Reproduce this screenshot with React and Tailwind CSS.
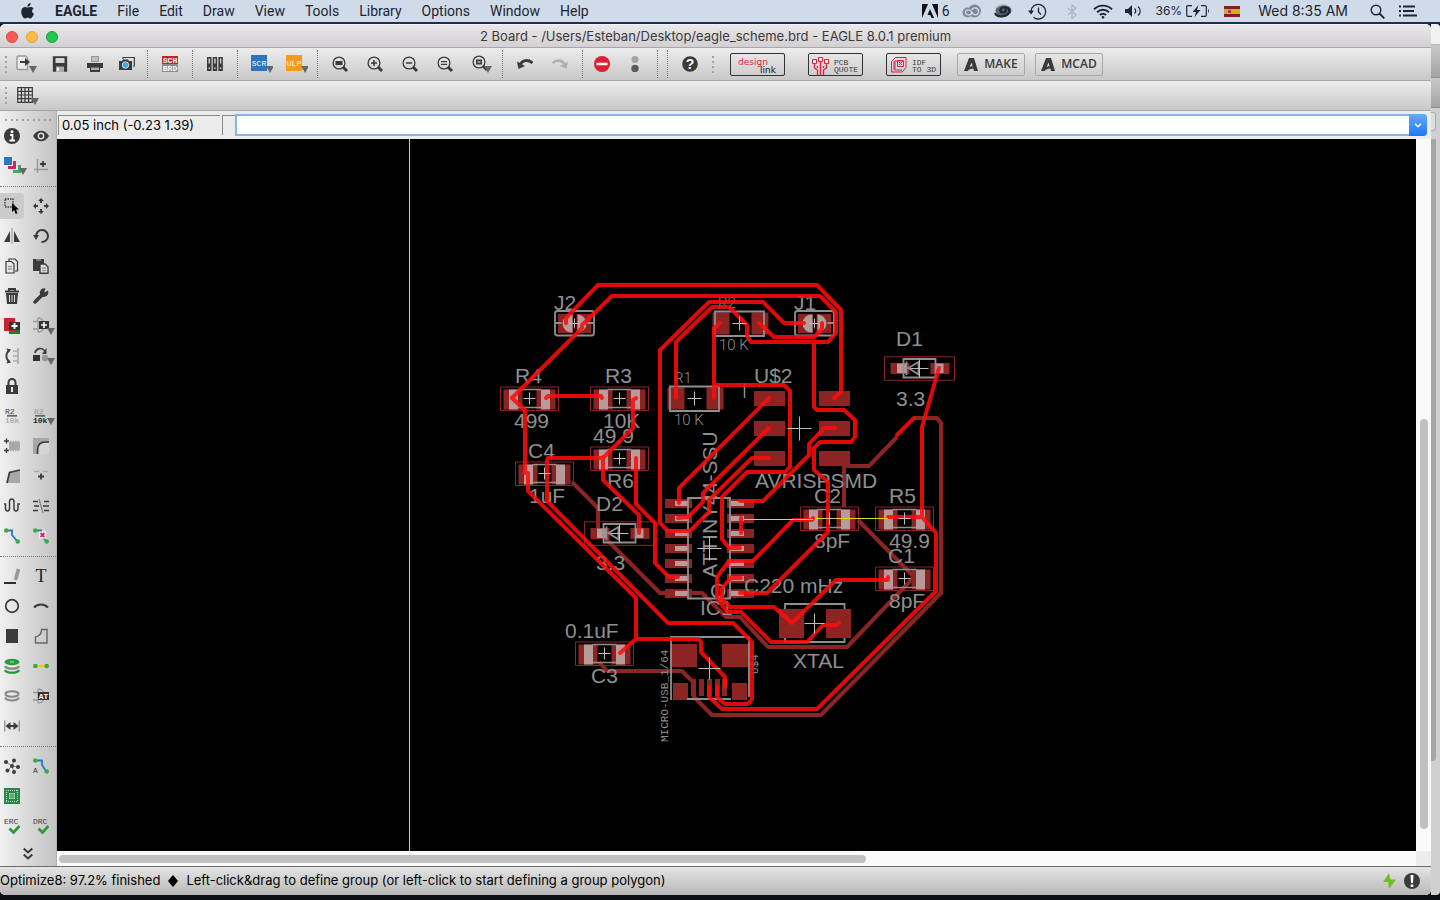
import { clsx } from 'clsx';

const DARK = '#3b3b3b';
const MAROON = '#8c2424';
const RED = '#ff0c0c';
const GREY = '#8f8f8f';
const PALE = '#b89a9a';

const Icon = ({ w = 16, h = 16, children }) => (
  <svg
    width={w}
    height={h}
    viewBox={`0 0 ${w} ${h}`}
    fill="none"
    stroke={DARK}
    strokeWidth="1.4"
    className="shrink-0"
    aria-hidden="true"
  >
    {children}
  </svg>
);

const Caret = ({ x = 12, y = 11 }) => <path d={`M${x} ${y}h8l-4 7z`} fill="#666" stroke="none" />;

const PixelText = ({ x, y, size = 8, fill = DARK, children, bold, anchor = 'start' }) => (
  <text
    x={x}
    y={y}
    fontSize={size}
    fill={fill}
    stroke="none"
    textAnchor={anchor}
    fontWeight={bold ? 700 : 400}
    fontFamily="'Liberation Mono', monospace"
  >
    {children}
  </text>
);

/* ---------- menu bar ---------- */

const menus = ['File', 'Edit', 'Draw', 'View', 'Tools', 'Library', 'Options', 'Window', 'Help'];

const AppleLogo = () => (
  <svg width="14" height="16" viewBox="0 0 14 16" fill="#1c2530" aria-hidden="true">
    <path d="M9.6 0c.1 1-.3 2-.9 2.700-.6.700-1.500 1.200-2.400 1.100-.1-1 .3-1.900.9-2.600C7.800.5 8.800.1 9.600 0z" />
    <path d="M12.600 5.400c-1 .6-1.500 1.500-1.500 2.600 0 1.300.7 2.300 1.900 2.800-.3.900-.7 1.700-1.200 2.500-.7 1.100-1.400 2.100-2.500 2.100s-1.400-.6-2.600-.6-1.600.6-2.600.6-1.800-1-2.500-2C.2 11.400-.3 7.900 1 5.800c.7-1.200 1.800-1.900 3-1.900 1.200 0 1.900.7 2.900.7.900 0 1.500-.7 2.900-.7 1 0 2.100.5 2.800 1.500z" />
  </svg>
);

const MenuBar = () => (
  <header className="flex h-[22px] shrink-0 items-center bg-[#d0dbea] pr-[23px] pl-[21px] text-sm text-[#1c2530]">
    <AppleLogo />
    <nav className="ml-5 flex items-center gap-5">
      <button className="font-bold">EAGLE</button>
      {menus.map((m) => (
        <button key={m}>{m}</button>
      ))}
    </nav>
    <div className="ml-auto flex items-center">
      <svg width="16" height="14" viewBox="0 0 16 14" fill="#0b0f18" aria-hidden="true">
        <path d="M0 0h6L0 14zM10 0h6v14zM8 5l4 9H9.500l-1.200-3H5.500z" />
      </svg>
      <span className="ml-1">6</span>
      <svg className="ml-3" width="20" height="14" viewBox="0 0 20 14" fill="none" aria-hidden="true">
        <circle cx="12.500" cy="7" r="6.500" fill="#7d8998" />
        <circle cx="5.500" cy="8.500" r="5" fill="#7d8998" />
        <path d="M10 9.500c-1.500 2-6.500 2-6.500-1.200 0-3 4-3 5.500-1l2.500 2.700c2 2 5 .5 5-2.500 0-4-5.500-5-7-1.500" stroke="#d0dbea" strokeWidth="1.300" />
      </svg>
      <svg className="ml-3" width="18" height="14" viewBox="0 0 18 14" fill="none" aria-hidden="true">
        <ellipse cx="9.500" cy="6.500" rx="8" ry="5.800" fill="#5a6470" />
        <path d="M1 9c2 5 12 4 14-.5 1.500-3-2-6-6-5C5 4.500 6 9 9.500 8.500c2.500-.3 3-2.500 1-2.800" stroke="#1c2530" strokeWidth="2.200" />
        <path d="M2 4c3-3 8-4 12-2" stroke="#a8b4c3" strokeWidth="1.200" />
      </svg>
      <svg className="ml-4" width="19" height="17" viewBox="0 0 19 17" fill="none" stroke="#1c2530" strokeWidth="1.300" aria-hidden="true">
        <path d="M3 9a7.300 7.300 0 1 1 2.500 5.200M10.500 4.500V9l2.500 2.500" />
        <path d="M0 7.500h6L3 11.500z" fill="#1c2530" stroke="none" />
      </svg>
      <svg className="ml-5" width="10" height="15" viewBox="0 0 10 15" fill="none" stroke="#a9b5c5" strokeWidth="1.200" aria-hidden="true">
        <path d="M1 4l8 7-4 3.500V.8L9 4 1 11" />
      </svg>
      <svg className="ml-4" width="20" height="15" viewBox="0 0 20 15" fill="none" stroke="#1c2530" strokeWidth="1.900" aria-hidden="true">
        <path d="M1 5.200c5-4.800 13-4.800 18 0M4 8.200c3.500-3.200 8.500-3.200 12 0M6.800 11c2-1.700 4.400-1.700 6.400 0" />
        <circle cx="10" cy="13.300" r="1" fill="#1c2530" strokeWidth=".8" />
      </svg>
      <svg className="ml-3" width="17" height="12" viewBox="0 0 17 12" fill="none" stroke="#1c2530" aria-hidden="true">
        <path d="M0 4h3l4-4v12L3 8H0z" fill="#1c2530" stroke="none" />
        <path d="M9.500 3.500c1.500 1.500 1.500 3.500 0 5M13 1.500c3 2.500 3 6.500 0 9" strokeWidth="1.200" />
      </svg>
      <span className="ml-3.5 font-[Inter,sans-serif] text-xs">36%</span>
      <svg className="ml-1" width="24" height="12" viewBox="0 0 24 12" fill="none" stroke="#1c2530" strokeWidth="1.200" aria-hidden="true">
        <path d="M6 .7H2C1 .7.700 1 .700 2v8c0 1 .3 1.300 1.300 1.300h4M15 .7h4c1 0 1.300.3 1.300 1.300v8c0 1-.3 1.300-1.300 1.300h-4" />
        <path d="M12.500 0L6.500 7h3.500l-1.500 5 6-7h-3.500zM22 4v4c1.200-.5 1.200-3.500 0-4z" fill="#1c2530" stroke="none" />
      </svg>
      <svg className="ml-3.5" width="16" height="11" viewBox="0 0 16 11" aria-hidden="true">
        <path d="M0 0h16v11H0z" fill="#8e1b1b" />
        <path d="M0 3h16v5H0z" fill="#d9a92c" />
        <path d="M4 4h3v3H4z" fill="#a8452c" />
      </svg>
      <span className="ml-[18px] font-[Inter,sans-serif]">Wed 8:35 AM</span>
      <svg className="ml-[22px]" width="15" height="15" viewBox="0 0 15 15" fill="none" stroke="#1c2530" strokeWidth="1.400" aria-hidden="true">
        <circle cx="6" cy="6" r="4.800" />
        <path d="M9.500 9.500l4.800 4.800" strokeWidth="1.800" />
      </svg>
      <svg className="ml-3.5" width="18" height="12" viewBox="0 0 18 12" fill="none" stroke="#1c2530" strokeWidth="2" aria-hidden="true">
        <path d="M0 1.500h2M0 6h2M0 10.500h2M4 1.500h12M4 6h11M4 10.500h14" />
      </svg>
    </div>
  </header>
);

/* ---------- toolbar icons ---------- */

const Magnifier = ({ children, caret }) => (
  <Icon w={caret ? 20 : 16} h={caret ? 18 : 16}>
    <circle cx="7" cy="7" r="5.900" strokeWidth="1.300" />
    <path d="M11 11l4 4" strokeWidth="3" />
    {children}
    {caret && <Caret />}
  </Icon>
);

const topTools = [
  {
    label: 'Open', wide: true, shift: true,
    icon: (
      <Icon w={21} h={18}>
        <path d="M2.500 1h7l2 2v11.500h-9a1.500 1.500 0 0 1-1.500-1.500V2.500A1.500 1.500 0 0 1 2.500 1z" stroke="#999" fill="#ececec" />
        <path d="M4 7h6" strokeWidth="2" />
        <path d="M9 3l5 4-5 4z" fill={DARK} stroke="none" />
        <Caret x={13} />
      </Icon>
    ),
  },
  {
    label: 'Save', wide: true,
    icon: (
      <Icon>
        <path d="M1.500 1h13v14h-13z" fill={DARK} stroke={DARK} />
        <path d="M3.500 2h9v5h-9z" fill="#d8d8d8" stroke="none" />
        <path d="M4 10.500h8V16H4z" fill="#aaa" stroke="none" />
        <path d="M5 11.500h2V15H5z" fill="#eee" stroke="none" />
      </Icon>
    ),
  },
  {
    label: 'Print', wide: true,
    icon: (
      <Icon>
        <path d="M4 0h8v6H4z" fill="#999" stroke="none" />
        <path d="M5 2h6M5 4h6" stroke="#e8e8e8" strokeWidth="1" />
        <path d="M0 7h16v5H0z" fill={DARK} stroke="none" />
        <path d="M3 10h10v6H3z" fill={DARK} stroke="none" />
        <path d="M4 11.500h8v2.500H4z" fill="#aaa" stroke="none" />
      </Icon>
    ),
  },
  {
    label: 'CAM Processor',
    icon: (
      <Icon>
        <path d="M4 3V1.500h11.300V10H14" stroke={DARK} strokeWidth="1.200" />
        <path d="M0 5h3l1-1.500h5L10 5h3v9H0z" fill={DARK} stroke="none" />
        <circle cx="6.500" cy="9" r="3.300" fill="#3fa9e6" stroke="#e8e8e8" strokeWidth=".8" />
      </Icon>
    ),
  },
  'sep',
  {
    label: 'Schematic', wide: true,
    icon: (
      <Icon>
        <path d="M0 0h16v8H0z" fill="#c4232f" stroke="none" />
        <path d="M0 8h16v8H0z" fill="#8c8c8c" stroke="none" />
        <PixelText x={8} y={7} anchor="middle" fill="#fff" bold>SCH</PixelText>
        <PixelText x={8} y={15} anchor="middle" fill="#fff" bold>BRD</PixelText>
      </Icon>
    ),
  },
  'sep',
  {
    label: 'Library manager', wide: true,
    icon: (
      <Icon>
        <path d="M0 1h4.500v14H0zM5.700 1h4.500v14H5.700zM11.400 1h4.500v14h-4.500z" fill={DARK} stroke="none" />
        <path d="M1.500 2.500h1.500v5H1.500zM7.200 2.500h1.500v5H7.200zM12.900 2.500h1.500v5h-1.500z" fill="#ccc" stroke="none" />
        <path d="M1.500 11.500h1.500v1.500H1.500zM7.200 11.500h1.500v1.500H7.200zM12.900 11.500h1.500v1.500h-1.500z" fill="#ccc" stroke="none" />
      </Icon>
    ),
  },
  'sep',
  {
    label: 'Run script', wide: true, shift: true,
    icon: (
      <Icon w={22} h={18}>
        <path d="M0 0h16v16H0z" fill="#2b76c0" stroke="none" />
        <PixelText x={8} y={11} anchor="middle" fill="#fff">SCR</PixelText>
        <Caret x={15} />
      </Icon>
    ),
  },
  {
    label: 'Run ULP', wide: true, shift: true,
    icon: (
      <Icon w={22} h={18}>
        <path d="M0 0h16v16H0z" fill="#f59a1b" stroke="none" />
        <PixelText x={8} y={11} anchor="middle" fill="#fff">ULP</PixelText>
        <Caret x={15} />
      </Icon>
    ),
  },
  'sep',
  { label: 'Zoom to fit', wide: true, icon: <Magnifier><path d="M3.500 5h7v4h-7z" fill={DARK} stroke="none" /></Magnifier> },
  { label: 'Zoom in', wide: true, icon: <Magnifier><path d="M4 7h6M7 4v6" strokeWidth="1.600" /></Magnifier> },
  { label: 'Zoom out', wide: true, icon: <Magnifier><path d="M4 7h6" strokeWidth="1.600" /></Magnifier> },
  { label: 'Redraw', wide: true, icon: <Magnifier><path d="M4 5.700h6M4 8.300h6" strokeWidth="1.300" /></Magnifier> },
  {
    label: 'Zoom select', wide: true, shift: true,
    icon: <Magnifier caret><path d="M4 4.500h6v5H4z" fill={DARK} stroke="none" /><path d="M5.500 6h3v2h-3z" fill="#999" stroke="none" /></Magnifier>,
  },
  'sep',
  {
    label: 'Undo', wide: true,
    icon: (
      <Icon>
        <path d="M3 9c2-5 8-6 12.500-2" strokeWidth="3" />
        <path d="M0 5.500l1.500 7.500L8 10z" fill={DARK} stroke="none" />
      </Icon>
    ),
  },
  {
    label: 'Redo', wide: true,
    icon: (
      <Icon>
        <path d="M13 9C11 4 5 3 .5 7" strokeWidth="2.600" stroke="#b3b0b0" />
        <path d="M16 5.500L14.500 13 8 10z" fill="#b3b0b0" stroke="none" />
      </Icon>
    ),
  },
  'sep',
  {
    label: 'Stop',
    icon: (
      <Icon>
        <circle cx="8" cy="8" r="8" fill="#dc1f35" stroke="none" />
        <path d="M2.500 8h11" stroke="#fff" strokeWidth="2.600" />
      </Icon>
    ),
  },
  {
    label: 'Go', wide: true,
    icon: (
      <Icon>
        <circle cx="8" cy="3.500" r="3.500" fill="#a3a3a3" stroke="none" />
        <circle cx="8" cy="12.500" r="3.700" fill="#5c5c5c" stroke="none" />
      </Icon>
    ),
  },
  'sep',
  'sep',
  {
    label: 'Help', wide: true,
    icon: (
      <Icon>
        <circle cx="8" cy="8" r="7.800" fill={DARK} stroke="none" />
        <text x="8" y="13" fontSize="14" fontWeight="700" textAnchor="middle" fill="#fff" stroke="none" fontFamily="'Liberation Sans', sans-serif">?</text>
      </Icon>
    ),
  },
];

const Handle = () => (
  <div className="flex w-[7px] shrink-0 flex-col items-end gap-[3px]">
    {[0, 1, 2, 3].map((i) => (
      <span key={i} className="h-[2px] w-[2px] bg-[#a3a3a3]" />
    ))}
  </div>
);

const AutodeskMark = () => (
  <svg width="14" height="13" viewBox="0 0 14 13" fill={DARK} aria-hidden="true">
    <path d="M5 0h5l4 13h-4L7.500 4.500 4 13H0z" />
    <path d="M4.500 9.500l4-1.700.8 2.400L4 12z" />
  </svg>
);

const LogoButton = ({ label, children }) => (
  <button aria-label={label} className="h-[23px] w-[55px] rounded-[2px] border border-[#333]">
    {children}
  </button>
);

const Toolbar = () => (
  <div className="flex h-[33px] shrink-0 items-center border-b border-[#a6a6a6] bg-linear-to-b from-[#ededed] to-[#c8c8c8]">
    <Handle />
    {topTools.map((t, i) =>
      t === 'sep' ? (
        <div key={i} className="flex w-[10px] shrink-0 justify-center">
          <span className="h-7 border-l border-dotted border-[#777]" />
        </div>
      ) : (
        <button
          key={i}
          aria-label={t.label}
          className={clsx('flex h-7 shrink-0 items-center justify-center', t.wide ? 'w-[35px]' : 'w-[30px]', t.shift && 'pl-1')}
        >
          {t.icon}
        </button>
      ),
    )}
    <Handle />
    <div className="ml-4 flex items-center gap-[23px]">
      <LogoButton label="design link">
        <svg width="53" height="21" viewBox="0 0 53 21" aria-hidden="true">
          <text x="7" y="11" fontSize="9" fill="#dc1f45" fontFamily="'DejaVu Sans', sans-serif">design</text>
          <text x="29" y="19" fontSize="9" fill="#111" fontFamily="'DejaVu Sans', sans-serif">link</text>
        </svg>
      </LogoButton>
      <LogoButton label="PCB quote">
        <svg width="53" height="21" viewBox="0 0 53 21" fill="none" stroke="#dc1f45" aria-hidden="true">
          <path d="M5.500 8v6l3 2v5M11.500 7v14M17.500 8v6l-3 2v5M8.500 12v2M14.500 12v2" strokeWidth="1.300" />
          <path d="M3.500 5.500h4v4h-4zM9.500 3.500h4v4h-4zM15.500 5.500h4v4h-4z" fill="#eee" />
          <PixelText x={25} y={11}>PCB</PixelText>
          <PixelText x={25} y={18}>QUOTE</PixelText>
        </svg>
      </LogoButton>
      <LogoButton label="IDF to 3D">
        <svg width="53" height="21" viewBox="0 0 53 21" fill="none" stroke="#dc1f45" aria-hidden="true">
          <path d="M4.500 7.500l4-4h10.500v10l-4 4.500H4.500zM8 15V7h8M10.500 6.500h6v6h-6zM7 7v9h8M12 8l3 3M15 8l-3 3" />
          <PixelText x={25} y={11}>IDF</PixelText>
          <PixelText x={25} y={18}>TO 3D</PixelText>
        </svg>
      </LogoButton>
    </div>
    <div className="ml-4 flex items-center gap-[10px]">
      {['MAKE', 'MCAD'].map((t) => (
        <button
          key={t}
          className="flex h-[23px] w-[68px] items-center justify-center gap-1.5 rounded-[2px] border border-[#a8a8a8] font-['Open_Sans',sans-serif] text-xs font-semibold text-[#3b3b3b]"
        >
          <AutodeskMark />
          {t}
        </button>
      ))}
    </div>
  </div>
);

const GridBar = () => (
  <div className="flex h-[30px] shrink-0 items-center border-b border-[#a6a6a6] bg-linear-to-b from-[#ededed] to-[#c8c8c8]">
    <Handle />
    <button aria-label="Grid" className="flex h-7 w-[41px] items-center justify-center">
      <Icon w={22} h={18}>
        <path d="M.7.7h14.600v14.600H.7zM4.400 0v16M8 0v16M11.600 0v16M0 4.400h16M0 8h16M0 11.600h16" strokeWidth="1.200" />
        <Caret x={14} />
      </Icon>
    </button>
  </div>
);

/* ---------- side palette ---------- */

const GateBody = () => <path d="M0 4.500h5M0 12h5M5 1v14M5 1c8 0 9 14 0 14" stroke="#999" strokeWidth="1.300" />;

const palette = [
  [
    [
      'Info',
      <Icon>
        <circle cx="8" cy="8" r="8" fill={DARK} stroke="none" />
        <path d="M6 7h2.500v5M5.500 12.500h5.500" stroke="#fff" strokeWidth="1.800" />
        <circle cx="8" cy="3.800" r="1.500" fill="#fff" stroke="none" />
      </Icon>,
    ],
    [
      'Show',
      <Icon>
        <path d="M0 8c4-7 12-7 16 0-4 7-12 7-16 0z" fill={DARK} stroke="none" />
        <circle cx="8" cy="8" r="2.700" stroke="#ddd" strokeWidth="1.500" />
      </Icon>,
    ],
    [
      'Layer settings',
      <Icon w={24} h={18}>
        <path d="M14 8h3v8H9v-3h5z" fill="#36ad69" stroke="none" />
        <path d="M9 4h3v8H4V9h5z" fill="#d9215a" stroke="none" />
        <path d="M0 0h8v8H0z" fill="#2b76c0" stroke="none" />
        <Caret x={15} y={11} />
      </Icon>,
    ],
    ['Mark', <Icon><path d="M4.500 1v14M1 11.500h14" stroke="#999" /><path d="M7 6h6M10 3v6" strokeWidth="1.800" /></Icon>],
  ],
  [
    [
      'Group',
      <Icon>
        <path d="M1 1h8v8H1z" strokeDasharray="1.500 1" />
        <path d="M8 5v9l2.200-2 1.500 4 1.800-.8-1.500-3.700H15z" fill="#000" stroke="none" />
      </Icon>,
    ],
    [
      'Move',
      <Icon>
        <path d="M8 0l3 3H9v2H7V3H5zM8 16l3-3H9v-2H7v2H5zM0 8l3-3v2h2v2H3v2zM16 8l-3-3v2h-2v2h2v2z" fill={DARK} stroke="none" />
      </Icon>,
    ],
    ['Mirror', <Icon><path d="M6 3v11H0zM10 3v11h6z" fill={DARK} stroke="none" /><path d="M8 0v16" stroke="#aaa" /></Icon>],
    ['Rotate', <Icon><path d="M3 8a6 6 0 1 1 5.500 6" strokeWidth="2" /><path d="M0 7h6l-3 5z" fill={DARK} stroke="none" /></Icon>],
    [
      'Copy',
      <Icon>
        <path d="M5 3V1h6l2.500 2.500V13H11" strokeWidth="1.200" />
        <path d="M2 3.500h5.500L10 6v9H2z" fill="#e8e8e8" strokeWidth="1.200" />
        <path d="M4 8.500h4M4 11h4" stroke="#999" />
      </Icon>,
    ],
    [
      'Paste',
      <Icon>
        <path d="M0 1h11v12H0z" fill={DARK} stroke="none" />
        <path d="M3 2h5" stroke="#999" />
        <path d="M7 6h5l3 3v6.300H7z" fill="#e3e3e3" />
        <path d="M9 10h4M9 12.500h4" stroke="#999" />
      </Icon>,
    ],
    [
      'Delete',
      <Icon>
        <path d="M1 3.500h14M5 2.500V1h6v1.500" strokeWidth="2" />
        <path d="M2 5h12l-1 11H3z" fill={DARK} stroke="none" />
        <path d="M5.500 7v7M8 7v7M10.500 7v7" stroke="#ddd" strokeWidth="1" />
      </Icon>,
    ],
    [
      'Change',
      <Icon>
        <path d="M2 14l7-7" strokeWidth="3.500" strokeLinecap="round" />
        <path d="M14.500 3.500a3.600 3.600 0 1 1-3-2.500l-1 3 1.500 1.200z" fill={DARK} stroke={DARK} />
      </Icon>,
    ],
    [
      'Add',
      <Icon>
        <path d="M5 11h11v5H5z" fill="#267a2b" stroke="none" />
        <path d="M0 0h11v13H0z" fill="#c4232f" stroke="none" />
        <path d="M5 4h11v8H5z" fill="#333" stroke="none" />
        <path d="M7.500 8h6M10.500 5v6" stroke="#fff" strokeWidth="1.800" />
      </Icon>,
    ],
    [
      'Add gate',
      <Icon w={22} h={18}>
        <GateBody />
        <path d="M6 4h10v8H6z" fill="#333" stroke="none" />
        <path d="M8 8h6M11 5v6" stroke="#fff" strokeWidth="1.600" />
        <Caret x={14} />
      </Icon>,
    ],
    [
      'Pin swap',
      <Icon>
        <path d="M5 2.500C1.500 5 1.500 11 5 13.500" strokeWidth="1.800" />
        <path d="M2.500.5L7 1.500 4.500 5zM2.500 15.500L7 14.500 4.500 11z" fill={DARK} stroke="none" />
        <path d="M14 0v16M9 3h5M9 8h5M9 13h5" stroke="#aaa" strokeWidth="1.600" />
      </Icon>,
    ],
    [
      'Replace',
      <Icon w={22} h={18}>
        <path d="M0 8h7v6H0z" fill="#333" stroke="none" />
        <circle cx="12" cy="11" r="3.200" fill="#999" stroke="none" />
        <path d="M2 6c1-5 7-6 10-2" strokeWidth="1.700" />
        <path d="M13.500 1v6H9z" fill={DARK} stroke="none" />
        <Caret x={14} />
      </Icon>,
    ],
    [
      'Lock',
      <Icon>
        <path d="M4.500 7V4.500a3.500 3.500 0 0 1 7 0V7" strokeWidth="2" />
        <path d="M2 7h12v9H2z" fill={DARK} stroke="none" />
        <path d="M8 9v5" stroke="#e8e8e8" strokeWidth="2" />
      </Icon>,
    ],
    null,
    [
      'Name',
      <Icon h={18}>
        <PixelText x={1} y={7}>R2</PixelText>
        <path d="M3 8.800h10" stroke="#666" strokeWidth="1.800" />
        <PixelText x={1} y={16} fill="#999">10k</PixelText>
      </Icon>,
    ],
    [
      'Value',
      <Icon w={22} h={18}>
        <PixelText x={1} y={7} fill="#999">R2</PixelText>
        <path d="M2 8.800h10" stroke="#666" strokeWidth="1.800" />
        <PixelText x={0} y={16} fill="#222" bold>10k</PixelText>
        <Caret x={14} />
      </Icon>,
    ],
    [
      'Smash',
      <Icon>
        <path d="M0 3h5M2.500.5v5M0 12.500h5M2.500 10v5" />
        <path d="M5 4h11v8H5z" fill="#aca7a7" stroke="none" />
        <path d="M6 3.500h10M6 12.500h10" stroke="#aca7a7" strokeDasharray="1.500 1" />
      </Icon>,
    ],
    ['Miter', <Icon><path d="M0 0h16v16H0z" fill="#aca7a7" stroke="none" /><path d="M5.500 16V12.500q0-8 8-8H16V16z" fill="#d5d5d5" stroke="none" /><path d="M4.500 16V12q0-8 8-8H16" strokeWidth="1.600" /></Icon>],
    ['Split', <Icon><path d="M3 15L6 4l10-2v13z" fill="#aca7a7" stroke="none" /><path d="M3 15L5.500 4.500 16 2" strokeWidth="1.700" /></Icon>],
    ['Optimize', <Icon><path d="M1 3.500h5M10 3.500h5" stroke="#aaa" /><path d="M5 8.500h6M8 5.500v6" strokeWidth="1.800" /></Icon>],
    ['Meander', <Icon><path d="M0 6h1.500v4c0 4 4 4 4 0V4c0-4 4.500-4 4.500 0v6c0 4 4 4 4 0V6H16" strokeWidth="1.500" /></Icon>],
    ['Ripup lanes', <Icon><path d="M0 3.500h5M1 8h5M0 12.500h5M11 3.500h5M10 8h6M11 12.500h5" /><path d="M6 1l4 14" stroke="#888" /></Icon>],
    ['Route', <Icon><path d="M2 2.500h6V7l5 6" stroke="#2b76c0" strokeWidth="1.800" /><g fill="#38ad3c" stroke="none"><circle cx="2.200" cy="2.500" r="2.200" /><circle cx="13.700" cy="13.500" r="2.200" /></g></Icon>],
    [
      'Ripup',
      <Icon>
        <path d="M2 2.500h6V7l5 6" stroke="#2b76c0" strokeWidth="1.800" />
        <g fill="#38ad3c" stroke="none"><circle cx="2.200" cy="2.500" r="2.200" /><circle cx="13.700" cy="13.500" r="2.200" /></g>
        <path d="M6 3.500h7v7H6z" fill="#fff" stroke="none" />
        <path d="M7.500 5l4 4M11.500 5l-4 4" stroke="#d9215a" strokeWidth="1.800" />
      </Icon>,
    ],
  ],
  [
    ['Line', <Icon><path d="M0 15h12" stroke="#000" strokeWidth="1.600" /><path d="M14.500 1l-3 11" stroke="#999" strokeWidth="3.500" /></Icon>],
    ['Text', <Icon h={20}><text x="8" y="16" fontSize="18" textAnchor="middle" fill="#222" stroke="none" fontFamily="'Liberation Serif', serif">T</text></Icon>],
    ['Circle', <Icon><circle cx="8" cy="8" r="6.300" strokeWidth="1.700" /></Icon>],
    ['Arc', <Icon><path d="M1 9.500c4-4 10-4 14 0" strokeWidth="2" /></Icon>],
    ['Rectangle', <Icon><path d="M2 1h12v14H2z" fill={DARK} stroke="none" /></Icon>],
    ['Polygon', <Icon><path d="M2.500 15V9C7 8 8.500 6 8.500 1.500H14V15z" stroke="#666" /></Icon>],
    [
      'Via',
      <Icon>
        <path d="M1 12c2 3.500 12 3.500 14 0" stroke="#1f9b36" strokeWidth="2.400" />
        <path d="M1 8c2 3.500 12 3.500 14 0" stroke="#888" strokeWidth="2.400" />
        <ellipse cx="8" cy="4" rx="7.500" ry="3.200" fill="#27a03b" stroke="none" />
        <path d="M6 4h4" stroke="#8fd49a" />
      </Icon>,
    ],
    ['Signal', <Icon><path d="M3 8h10" stroke="#f7c51e" strokeWidth="2.400" /><circle cx="2.300" cy="8" r="2.300" fill="#38ad3c" stroke="none" /><circle cx="13.700" cy="8" r="2.300" fill="#38ad3c" stroke="none" /></Icon>],
    ['Hole', <Icon><ellipse cx="8" cy="6" rx="6.500" ry="2.700" stroke="#888" strokeWidth="2" /><path d="M1 9.500c2 4 12 4 14 0" stroke="#888" strokeWidth="2" /></Icon>],
    [
      'Attribute',
      <Icon>
        <GateBody />
        <path d="M5 4h11v8H5z" fill="#333" stroke="none" />
        <PixelText x={10.500} y={11} anchor="middle" fill="#fff" bold>AT</PixelText>
      </Icon>,
    ],
    ['Dimension', <Icon><path d="M.7 2.500v11M15.300 2.500v11" stroke="#999" /><path d="M4 8h8" strokeWidth="2" /><path d="M1.500 8l5-4v8zM14.500 8l-5-4v8z" fill={DARK} stroke="none" /></Icon>],
    null,
  ],
  [
    [
      'Ratsnest',
      <Icon>
        <path d="M8 8L2 4M8 8l2-6M8 8l6 1M8 8l-4 4M8 8l2 6" strokeWidth="1" stroke="#888" />
        <g fill={DARK} stroke="none"><circle cx="8" cy="8" r="2" /><circle cx="2" cy="4" r="2" /><circle cx="10" cy="2.500" r="2" /><circle cx="14" cy="9" r="2" /><circle cx="3.500" cy="12.500" r="2" /><circle cx="10" cy="14" r="2" /></g>
      </Icon>,
    ],
    [
      'Autorouter',
      <Icon h={18}>
        <path d="M2 3.500h7V8l4 6" stroke="#2b76c0" strokeWidth="1.800" />
        <g fill="#38ad3c" stroke="none"><circle cx="2.200" cy="3.500" r="2.200" /><circle cx="13.700" cy="14.500" r="2.200" /></g>
        <PixelText x={0} y={16}>A</PixelText>
      </Icon>,
    ],
    [
      'Design manager',
      <Icon>
        <path d="M0 0h16v16H0z" fill="#238a45" stroke="none" />
        <path d="M2 2.500h12M2 13.500h12M2.500 2v12M13.500 2v12" stroke="#cfe5d5" strokeWidth="1" strokeDasharray="1 1" />
        <path d="M5 5h6v6H5z" fill="#cfe5d5" stroke="none" />
        <path d="M7 5v6M9 5v6M5 7h6M5 9h6" stroke="#238a45" strokeWidth=".8" />
      </Icon>,
    ],
    null,
    ['ERC', <Icon h={18}><PixelText x={0} y={7}>ERC</PixelText><path d="M5.500 11.500l4 4 6-6.500" stroke="#30973a" strokeWidth="2.800" /></Icon>],
    ['DRC', <Icon h={18}><PixelText x={0} y={7}>DRC</PixelText><path d="M5.500 11.500l4 4 6-6.500" stroke="#30973a" strokeWidth="2.800" /></Icon>],
  ],
];

const Palette = () => (
  <aside className="flex w-[57px] shrink-0 flex-col border-r border-[#b0b0b0] bg-linear-to-r from-[#f0f0f0] to-[#c3c3c3]">
    <div className="mx-[5px] flex h-[10px] shrink-0 items-end justify-between">
      {Array.from({ length: 9 }, (_, i) => (
        <span key={i} className="h-[2px] w-[2px] bg-[#a3a3a3]" />
      ))}
    </div>
    {palette.map((group, g) => (
      <div key={g}>
        {g > 0 && (
          <div className="flex h-[10px] items-center">
            <span className="w-full border-t border-dotted border-[#777]" />
          </div>
        )}
        <div className="grid grid-cols-[24px_33px]">
          {group.map((tool, i) =>
            tool ? (
              <button
                key={i}
                aria-label={tool[0]}
                className={clsx(
                  'my-0.5 flex h-[26px] items-center',
                  tool[0] === 'Group' && 'rounded-r-[3px] bg-[#cbcbcb]',
                  i % 2 === 1 ? 'pl-[9px]' : 'pl-1',
                )}
              >
                {tool[1]}
              </button>
            ) : (
              <span key={i} />
            ),
          )}
        </div>
      </div>
    ))}
    <button aria-label="More tools" className="mx-auto flex flex-1 items-center">
      <Icon w={10} h={14}>
        <path d="M.7 1.500L5 5.500l4.300-4M.7 7.500L5 11.500l4.300-4" strokeWidth="2" />
      </Icon>
    </button>
  </aside>
);

/* ---------- board ---------- */

const Cross = ({ x, y, r = 7 }) => (
  <path d={`M${x - r} ${y}h${2 * r}M${x} ${y - r}v${2 * r}`} stroke="#c4bcbc" strokeWidth="1" />
);

const ChipBody = ({ x, y }) => (
  <g transform={`translate(${x} ${y})`}>
    <path d="M-29-11.500h58v23.500h-58z" stroke={MAROON} strokeWidth="1" />
    <path d="M-26-9H-7v20H-26zM7-9H26v20H7z" fill={MAROON} />
    <path d="M-20.500-9h9v20h-9zM11.500-9h9v20h-9z" fill={PALE} />
    <path d="M-12-9h24M-12 9h24" stroke={GREY} strokeWidth="1.600" />
  </g>
);

const Resistor = ({ x, y }) => (
  <g transform={`translate(${x} ${y})`}>
    <path d="M-27-11h17v22h-17zM12-11h17v22H12z" fill={MAROON} />
    <path d="M-24.500-12h49v24.500h-49z" stroke={GREY} strokeWidth="1.800" />
  </g>
);

const Jumper = ({ x, y }) => (
  <g transform={`translate(${x} ${y})`}>
    <path d="M-16.500-9.500h15v19h-15zM2-9.500h14.500v19H2z" fill={MAROON} />
    <path d="M-2-9v18a9 9 0 0 1-10-9 9 9 0 0 1 10-9zM3-9v18a9 9 0 0 0 9-9 9 9 0 0 0-9-9z" fill={PALE} />
    <rect x="-19.500" y="-12.500" width="39" height="24.500" rx="2.500" stroke={GREY} strokeWidth="1.800" />
    <path d="M-19-.5h6M13-.5h6" stroke={GREY} strokeWidth="1.800" />
  </g>
);

const Diode = ({ x, y }) => (
  <g transform={`translate(${x} ${y})`}>
    <path d="M-35-11.700h70v23.500h-70z" stroke={MAROON} strokeWidth="1" />
    <path d="M-29-5.500h19v11h-19zM11-5.500h19v11H11z" fill={MAROON} />
    <path d="M-22.500-5h10v9.500h-10zM16-5h8v9.500h-8z" fill={PALE} />
    <path d="M-16-9.500h32v18.500h-32z" stroke={GREY} strokeWidth="1.800" />
    <path d="M-13-7V6.500M-1-6.500L-11-.5-1 6z" stroke={GREY} strokeWidth="1.800" />
  </g>
);

const chips = [[529.500, 398.500], [619.500, 398.500], [619.500, 458.500], [544.500, 473.500], [604.500, 653.500], [829.500, 518.500], [904.500, 518.500], [904.500, 578.500]];
const pinRows = [503.500, 518.500, 533.500, 548.500, 563.500, 578.500, 593.500];

const bottomTraces = [
  'M914 418H937L941 423V593L821 715H712L694 697V683L682 671H607L599 662',
  'M897 437L869 466H844V507',
  'M858 520L914 577L847 647H768L740 617H726L702 593H660L605 538',
  'M572 482L598 508V530',
];

const topTraces = [
  'M566 323V318L598 285H817L841 310V392L834 398',
  'M512 398L582 328V325L612 296H820L836 312V333L828 342H751L747 336V325L729 307H712L676 342V398',
  'M512 398L525 410V473H528V491L636 598V639L620 653',
  'M636 639H699L701 642V652L725 677V687',
  'M804 323H784L763 302H709L660 350V523L668 531H690L709 512V500L752 458H769',
  'M759 323L774 337H814L822 329V323',
  'M720 323L714 328V398',
  'M714 385H784L790 391V467L785 472H747L722 497V539L729 548H740',
  'M814 342V407L817 410H844L855 420V437L851 442H820L814 448V470L828 482V532L767 593H740',
  'M835 428H824L809 444V455L763 501H740',
  'M769 398L679 488V503',
  'M769 428L703 493V502L688 517L678 518',
  'M546 398L548 396H601L602 398',
  'M636 398L633 400V428L603 458H548L547 461V501L668 623H733L752 642V699L748 704H725L717 697V687',
  'M603 457V480L639 515V533',
  'M636 458V504L655 523V563L669 577H678',
  'M813 518L812 520H793L753 561H729L717 577V598L727 612H741L771 642H807L823 625H837L839 623',
  'M741 578H731L722 588V599L730 607H774L792 623L836 580H888V577',
  'M741 518V533',
  'M939 368L922 427V517H888',
  'M922 517L936 533V591L817 709H722L709 697V687',
  'M897 435L914 418',
];

const labels = [
  [554, 310, 'J2'], [515, 383, 'R4'], [605, 383, 'R3'], [514, 428, '499'], [603, 428, '10K'], [593, 443, '49.9'],
  [607, 488, 'R6'], [528, 458, 'C4'], [529, 503, '1uF'], [596, 511, 'D2'], [596, 570, '3.3'], [565, 638, '0.1uF'],
  [591, 683, 'C3'], [700, 615, 'IC1'], [710, 598, 'Q'], [744, 593, 'C220 mHz'], [793, 668, 'XTAL'], [755, 488, 'AVRISPSMD'],
  [814, 503, 'C2'], [889, 503, 'R5'], [814, 548, '8pF'], [889, 548, '49.9'], [888, 563, 'C1'], [889, 608, '8pF'],
  [896, 346, 'D1'], [896, 406, '3.3'], [754, 383, 'U$2'], [794, 310, 'J1'],
];

const thinLabels = [[718, 308, 'R2'], [674, 383, 'R1'], [719, 350, '10 K'], [674, 425, '10 K']];

const Board = () => (
  <div className="min-w-0 flex-1 overflow-hidden bg-black">
    <svg className="h-full w-full" fill="none" role="img" aria-label="Board layout">
      <g transform="translate(-57 -139)">
        <path d="M409.500 139v2000" stroke="#c9c9c9" strokeWidth="1" />
        <g stroke={MAROON} strokeWidth="4" strokeLinejoin="round">
          {bottomTraces.map((d) => <path key={d} d={d} />)}
        </g>
        {chips.map(([x, y]) => <ChipBody key={`${x}-${y}`} x={x} y={y} />)}
        <Resistor x={694.500} y={398.500} />
        <Resistor x={739.500} y={323.500} />
        <Jumper x={574.500} y={323.500} />
        <Jumper x={814.500} y={323.500} />
        <Diode x={619.500} y={533.500} />
        <Diode x={919.500} y={368.500} />
        {[391, 421, 451].map((y) => (
          <path key={y} d={`M754 ${y}h31v15h-31zM819 ${y}h31v15h-31z`} fill={MAROON} />
        ))}
        <g>
          {pinRows.map((y) => (
            <g key={y} transform={`translate(0 ${y})`}>
              <path d="M665-4.500h27v9h-27zM727-4.500h27v9h-27z" fill={MAROON} />
              <path d="M675-2.500h13v5h-13zM731-2.500h13v5h-13z" fill={PALE} />
            </g>
          ))}
          <path d="M688 498h42v100.500h-42z" stroke={GREY} strokeWidth="1.800" />
        </g>
        <path d="M779 609h25v29h-25zM826 609h25v29h-25z" fill={MAROON} />
        <path d="M785 609v-5h59.500v5M785 638v4h59.500v-4" stroke={GREY} strokeWidth="1.800" />
        <path
          d="M670 644h27v23h-27zM722 644h27v23h-27zM673 683h15v17h-15zM732 683h15v17h-15zM691 679h5v17h-5zM699 679h5v17h-5zM707 679h5v17h-5zM715 679h5v17h-5zM722 679h5v17h-5z"
          fill={MAROON}
        />
        <path d="M671 700v-63h78v60M687 699h44" stroke={GREY} strokeWidth="1.800" />
        <path d="M744.500 383v15" stroke={GREY} strokeWidth="1.500" />
        <g fill={GREY} fontFamily="'Liberation Sans', sans-serif" fontSize="21">
          {labels.map(([x, y, t]) => <text key={`${t}-${x}-${y}`} x={x} y={y}>{t}</text>)}
          <text transform="translate(717 578) rotate(-90)">ATTINY44-SSU</text>
        </g>
        <g fill={GREY} fontFamily="Roboto, sans-serif" fontWeight="300" fontSize="15">
          {thinLabels.map(([x, y, t]) => <text key={`${t}-${x}`} x={x} y={y}>{t}</text>)}
        </g>
        <g fill={GREY} fontFamily="'Liberation Mono', monospace" fontSize="11">
          <text transform="translate(668 742) rotate(-90)">MICRO-USB_1/64</text>
          <text transform="translate(758 674) rotate(-90)">U$4</text>
        </g>
        {/* silkscreen stays faintly visible through the copper */}
        <g stroke={RED} strokeWidth="4" strokeLinejoin="round" strokeLinecap="round" opacity=".87">
          {topTraces.map((d) => <path key={d} d={d} />)}
        </g>
        <path d="M743 519.500H813M815 518.500H888" stroke="#e3dc12" strokeWidth="1.200" />
        {chips.map(([x, y]) => <Cross key={`${x}-${y}`} x={x} y={y} r={6} />)}
        <Cross x={694.500} y={398.500} />
        <Cross x={739.500} y={323.500} />
        <Cross x={574.500} y={323.500} r={5} />
        <Cross x={814.500} y={323.500} r={5} />
        <Cross x={619.500} y={533.500} r={9} />
        <Cross x={919.500} y={368.500} r={9} />
        <Cross x={799.500} y={428.500} r={12} />
        <Cross x={709.500} y={548.500} r={12} />
        <Cross x={814.500} y={623.500} r={10} />
        <Cross x={709.500} y={668.500} r={11} />
      </g>
    </svg>
  </div>
);

const CommandRow = () => (
  <div className="flex h-[28px] shrink-0 items-center bg-[#ececec] pr-1 pl-px">
    <output className="h-[20px] w-[162px] border-t border-l border-[#8a8a8a] pl-[3px] font-[Inter,sans-serif] text-[13px] leading-[18px] text-black">
      0.05 inch (-0.23 1.39)
    </output>
    <span className="ml-0.5 h-[20px] w-[13px] border-t border-l border-[#8a8a8a]" />
    <div className="flex h-[22px] min-w-0 flex-1 rounded-r-[4px] border-2 border-[#86b5e8] bg-white">
      <input aria-label="Command" className="min-w-0 flex-1 px-1 text-[13px] outline-none" />
      <button aria-label="Command history" className="-my-0.5 -mr-0.5 flex w-[18px] items-center justify-center rounded-r-[4px] bg-linear-to-b from-[#62abf8] to-[#1a78f5]">
        <svg width="8" height="5" viewBox="0 0 8 5" fill="none" stroke="#fff" strokeWidth="1.500" aria-hidden="true">
          <path d="M1 .7l3 3 3-3" />
        </svg>
      </button>
    </div>
  </div>
);

const Workspace = () => (
  <main className="flex min-h-0 flex-1">
    <Palette />
    <div className="flex min-w-0 flex-1 flex-col">
      <CommandRow />
      <div className="flex min-h-0 flex-1">
        <Board />
        <div className="flex w-[15px] shrink-0 flex-col items-center bg-[#fafafa] pt-[280px] pb-[22px]">
          <span className="w-2 flex-1 rounded-full bg-[#c1c1c1]" />
        </div>
      </div>
      <div className="flex h-[15px] shrink-0">
        <div className="flex flex-1 items-center bg-[#fafafa] pl-0.5">
          <span className="h-2 w-[59.5%] rounded-full bg-[#c1c1c1]" />
        </div>
        <span className="w-[15px] bg-[#ececec]" />
      </div>
    </div>
  </main>
);

const StatusBar = () => (
  <footer className="flex h-[29px] shrink-0 items-center rounded-b-[4px] border-t border-[#6f6f6f] bg-linear-to-b from-[#e4e4e4] to-[#b8b8b8] pr-[11px] font-[Inter,sans-serif] text-[13px] text-black">
    <span>Optimize8: 97.2% finished</span>
    <svg className="mx-2" width="10" height="12" viewBox="0 0 10 12" aria-hidden="true">
      <path d="M5 0l5 6-5 6-5-6z" />
    </svg>
    <span>Left-click&amp;drag to define group (or left-click to start defining a group polygon)</span>
    <svg className="ml-auto" width="13" height="16" viewBox="0 0 13 16" fill="#72bd2c" aria-hidden="true">
      <path d="M6 0L0 9h5l1 7 7-9.500H7.500z" />
    </svg>
    <svg className="ml-2" width="16" height="16" viewBox="0 0 16 16" aria-hidden="true">
      <circle cx="8" cy="8" r="8" fill={DARK} />
      <path d="M6.500 2h3l-.5 8H7zM6.700 11.500h2.600V14H6.700z" fill="#fff" />
    </svg>
  </footer>
);

const TitleBar = () => (
  <div className="flex h-[23px] shrink-0 items-center border-b border-[#a9a7a9] bg-linear-to-b from-[#e9e7e9] to-[#d2d0d2] px-[6px] pt-px">
    <div className="flex w-[53px] gap-2">
      <button aria-label="Close" className="h-3 w-3 rounded-full border border-[#e2463f] bg-[#fc5b57]" />
      <button aria-label="Minimize" className="h-3 w-3 rounded-full border border-[#e0a13a] bg-[#fdbc45]" />
      <button aria-label="Zoom" className="h-3 w-3 rounded-full border border-[#1ba343] bg-[#1fc84f]" />
    </div>
    <h1 className="flex-1 pr-[53px] text-center font-[Inter,sans-serif] text-[13px] text-[#3a3a3a]">
      2 Board - /Users/Esteban/Desktop/eagle_scheme.brd - EAGLE 8.0.1 premium
    </h1>
  </div>
);

/* edge of the second window peeking out on the right */
const BackWindow = () => (
  <div className="flex w-[9px] shrink-0 flex-col rounded-r-[4px] bg-[#d0d0d0]">
    <span className="h-[21px] rounded-tr-[4px] border-b border-[#b5b5b5] bg-[#f2f2f2]" />
    <span className="h-[33px] border-b border-[#8e8e8e] bg-linear-to-b from-[#c9c9c9] to-[#a3a3a3]" />
    <span className="h-[30px] border-b border-[#8e8e8e] bg-linear-to-b from-[#c9c9c9] to-[#a3a3a3]" />
    <span className="mt-1 h-[19px] w-[5px] rounded-r-[3px] border border-l-0 border-[#aaa] bg-[#ddd]" />
    <span className="mt-2 mb-[134px] w-[5px] flex-1 rounded-br-[4px] bg-[#a6a6a6]" />
  </div>
);

const App = () => (
  <div className="flex h-screen flex-col overflow-hidden bg-[#0b1016] font-[Roboto,sans-serif]">
    <MenuBar />
    <div className="h-0.5 shrink-0 bg-[#1c2f52]" />
    <div className="mb-[5px] flex min-h-0 flex-1 bg-[#0b1016]">
      <div className="flex min-w-0 flex-1 flex-col overflow-hidden rounded-[5px] border-t border-[#f5f5f5] bg-[#ececec]">
        <TitleBar />
        <Toolbar />
        <GridBar />
        <Workspace />
        <StatusBar />
      </div>
      <BackWindow />
    </div>
  </div>
);

export default App;
